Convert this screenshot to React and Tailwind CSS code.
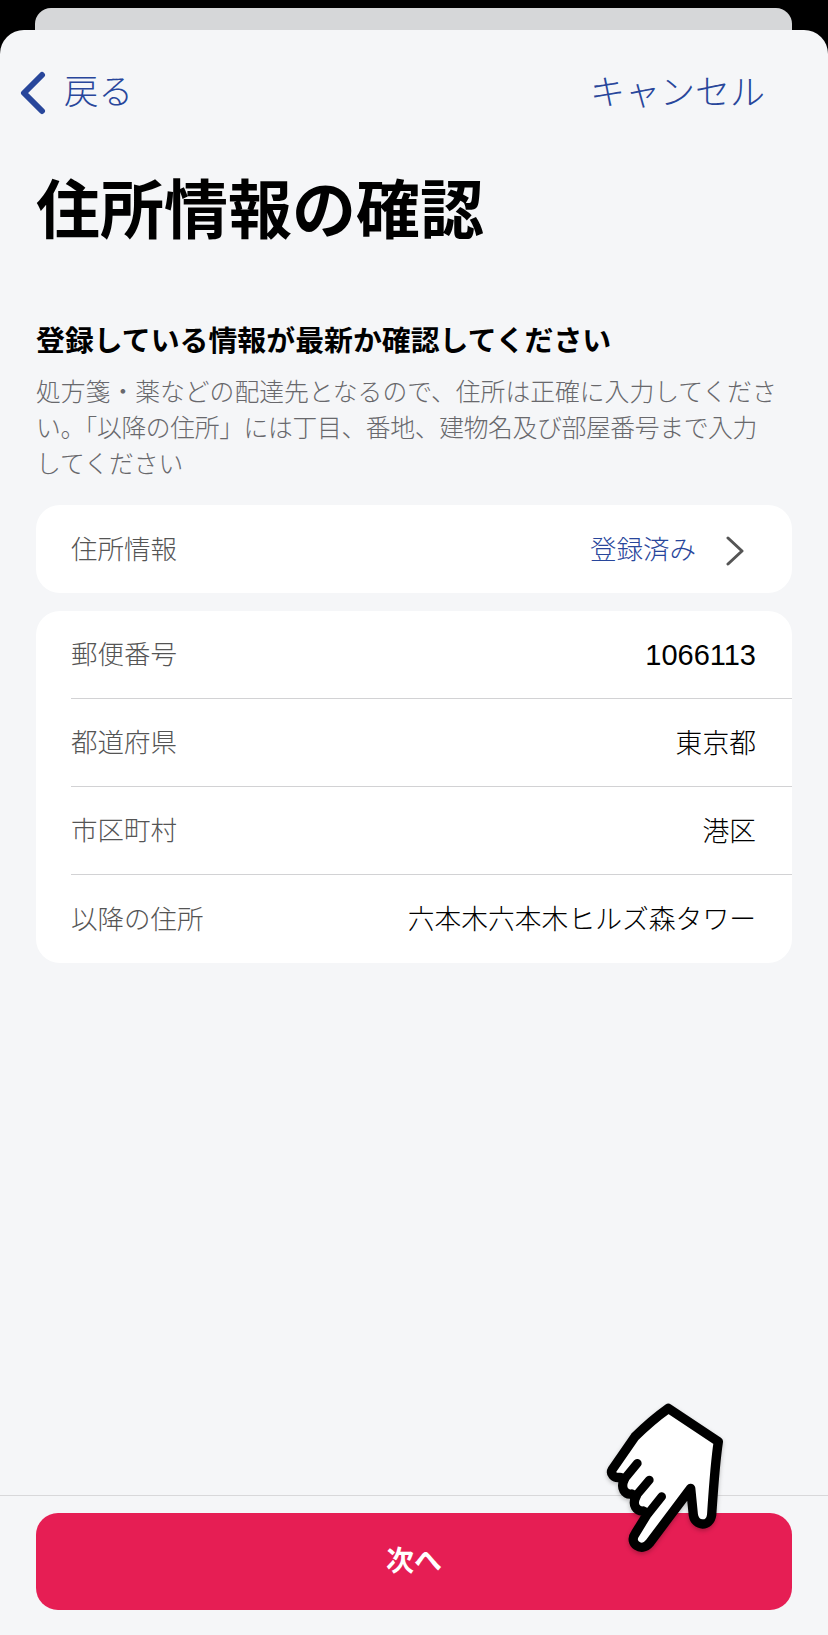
import React from "react";

const font = { jp: "font-['Liberation_Sans','Noto_Sans_CJK_JP',sans-serif]" };

function Row({ label, value, digits }) {
  return (
    <div className="ml-[35px] h-[88px] flex items-center justify-between pr-[36px] pt-[3px] border-b border-[#d2d2d4] last:border-b-0">
      <span className="text-[26.5px] font-light text-[#555555]">{label}</span>
      <span className={digits ? "text-[29px] font-normal text-black" : "text-[26.8px] font-light text-black"}>{value}</span>
    </div>
  );
}

function Hand() {
  return (
    <svg viewBox="0 0 744 765" className="absolute left-[580px] top-[1380px] w-[248px] h-[255px] drop-shadow-[0_2px_2px_rgba(0,0,0,0.25)]">
      <path
        d="M265 85 L415 185 C405 250 400 330 395 405 C390 442 345 440 340 405 L332 325 L208 490 C185 518 145 490 165 462 L203 400 L190 393 C170 395 155 375 168 350 L155 342 C135 345 120 325 133 298 L120 292 C100 295 90 280 97 268 L165 170 C195 140 230 110 265 85 Z"
        fill="#fff"
        stroke="#000"
        strokeWidth="28"
        strokeLinejoin="round"
      />
      <path
        d="M172 250 L135 295 M208 300 L170 345 M245 350 L205 400"
        fill="none"
        stroke="#000"
        strokeWidth="26"
        strokeLinecap="round"
      />
    </svg>
  );
}

export default function App() {
  return (
    <div className={`relative h-[1635px] w-[828px] bg-black overflow-hidden flex flex-col ${font.jp}`}>
      <div className="ml-[35px] mr-[36px] mt-[8px] h-[22px] shrink-0 rounded-t-[16px] bg-[#d6d7d9]" />
      <div className="flex-1 rounded-t-[24px] bg-[#f5f6f8] flex flex-col">
        {/* nav */}
        <div className="flex items-center justify-between pl-[20px] pr-[63px] pt-[38px] h-[88px]">
          <div className="flex items-center gap-[18px] text-[#28469b]">
            <svg viewBox="0 0 26 44" className="w-[26px] h-[44px]" fill="none" stroke="#28469b" strokeWidth="6" strokeLinecap="round" strokeLinejoin="round">
              <path d="M22 4 L4 22 L22 40" />
            </svg>
            <span className="text-[34.4px] font-light">戻る</span>
          </div>
          <span className="text-[35px] font-light text-[#28469b]">キャンセル</span>
        </div>

        <h1 className="mt-[51px] ml-[36px] text-[64px] leading-[84px] font-bold text-black">住所情報の確認</h1>

        <h2 className="mt-[68px] ml-[36px] text-[28.9px] leading-[40px] font-bold text-black">登録している情報が最新か確認してください</h2>
        <p className="mt-[14px] mx-[36px] text-[24.8px] leading-[36px] font-light text-[#68686c]">
          処方箋・薬などの配達先となるので、住所は正確に入力してくださ
          <br />
          <span className="tracking-[-0.35px]">い。「以降の住所」には丁目、番地、建物名及び部屋番号まで入力</span>
          <br />
          してください
        </p>

        <div className="mt-[22px] mx-[36px] h-[88px] rounded-[24px] bg-white flex items-center justify-between pl-[35px] pr-[48px] pt-[3px]">
          <span className="text-[26.5px] font-light text-[#555555]">住所情報</span>
          <div className="flex items-center gap-[30px]">
            <span className="text-[26.5px] font-light text-[#28469b]">登録済み</span>
            <svg viewBox="0 0 18 30" className="w-[18px] h-[30px]" fill="none" stroke="#555555" strokeWidth="3" strokeLinecap="round" strokeLinejoin="round">
              <path d="M2 2 L16 15 L2 28" />
            </svg>
          </div>
        </div>

        <div className="mt-[18px] mx-[36px] rounded-[24px] bg-white">
          <Row label="郵便番号" value="1066113" digits />
          <Row label="都道府県" value="東京都" />
          <Row label="市区町村" value="港区" />
          <Row label="以降の住所" value="六本木六本木ヒルズ森タワー" />
        </div>

        {/* footer */}
        <div className="mt-auto border-t border-[#d8d8da] px-[36px] pt-[17px] pb-[25px]">
          <div className="h-[97px] rounded-[22px] bg-[#e61e54] flex items-center justify-center">
            <span className="text-[28px] font-bold text-white">次へ</span>
          </div>
        </div>
      </div>
      <Hand />
    </div>
  );
}
